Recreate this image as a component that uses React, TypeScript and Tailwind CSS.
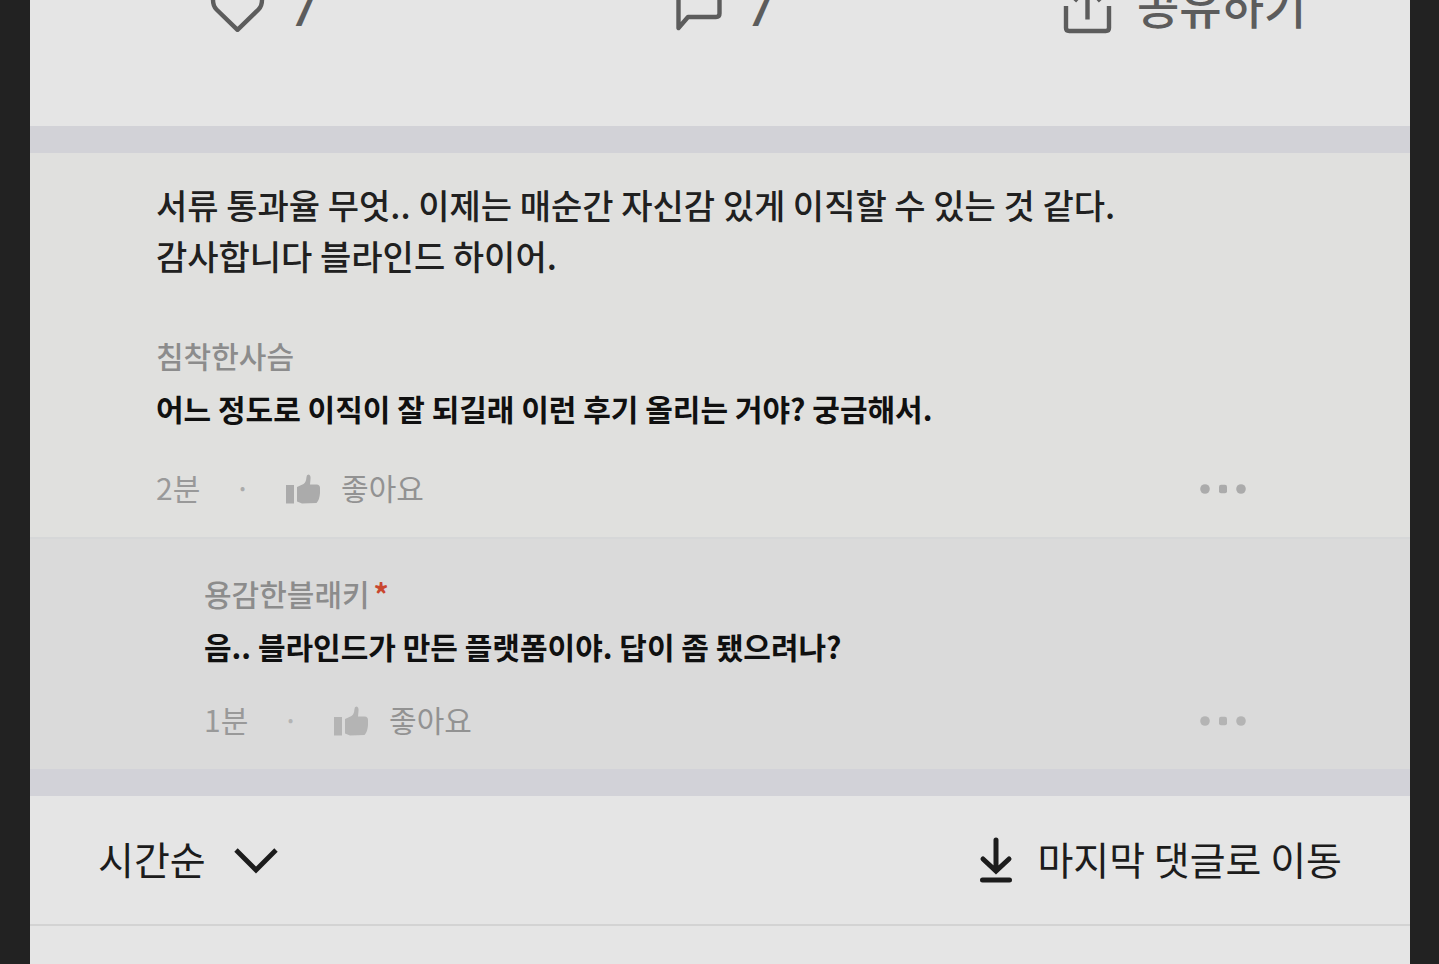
import type { ReactNode } from "react";

function HeartIcon() {
  return (
    <svg className="mt-1" width="56" height="54" viewBox="0 0 56 54" fill="none" stroke="currentColor" strokeWidth="4.4" strokeLinejoin="round" aria-hidden="true">
      <path d="M27.500 48.800 6.500 28.500Q3 25 3 19C3 10 9.500 4 16 4C21 4 25 6.500 27.500 11C30 6.500 34 4 39 4C45.500 4 52 10 52 19Q52 25 48.500 28.500Z" />
    </svg>
  );
}

function CommentIcon() {
  return (
    <svg className="mt-1" width="48" height="54" viewBox="0 0 48 54" fill="none" stroke="currentColor" strokeWidth="4.4" strokeLinejoin="round" aria-hidden="true">
      <path d="M3.500 47V8Q3.500 4 7.500 4H40.500Q44.500 4 44.500 8V32.500Q44.500 36 41 36H13Z" />
    </svg>
  );
}

function ShareIcon() {
  return (
    <svg className="mt-1" width="50" height="54" viewBox="0 0 50 54" fill="none" stroke="currentColor" strokeWidth="4.4" strokeLinejoin="round" aria-hidden="true">
      <path d="M3 25V47Q3 50 6.200 50H42.800Q46 50 46 47V25M24.500 38.500V5M11.500 20 24.500 6 37.500 20" />
    </svg>
  );
}

function ThumbIcon() {
  return (
    <svg className="mt-1" width="36" height="32" viewBox="0 0 36 32" fill="currentColor" aria-hidden="true">
      <path d="M1 12H9V30.500H1ZM12 14 18.500 11Q21 9.500 21.500 4Q21.500 1.500 23.500 1.500Q26 2 25.500 6L25 11.500H31.500Q35 11.500 35 15V20Q34.500 27 31.500 30L17 30.500 12 28.500Z" />
    </svg>
  );
}

function MoreIcon() {
  return (
    <svg className="mt-1" width="48" height="12" viewBox="0 0 48 12" fill="currentColor" aria-hidden="true">
      <circle cx="6" cy="6" r="4.800" />
      <rect x="20" y="1.800" width="8" height="8.400" rx="2" />
      <circle cx="42" cy="6" r="4.800" />
    </svg>
  );
}

function Action({ icon, children }: { icon: ReactNode; children: ReactNode }) {
  return (
    <button type="button" className="flex h-15 items-center gap-6 font-medium">
      {icon}
      {children}
    </button>
  );
}

function Count({ children }: { children: ReactNode }) {
  return <span className="pt-2 font-['Roboto',sans-serif] font-medium">{children}</span>;
}

type CommentProps = {
  author: string;
  isWriter?: boolean;
  time: string;
  metaClass: string;
  children: ReactNode;
};

function Comment({ author, isWriter, time, metaClass, children }: CommentProps) {
  return (
    <article>
      <p className="flex gap-1 text-[30px] leading-[52px] font-medium text-[#8c8c8c]">
        {author}
        {isWriter && <span className="font-bold text-[#c9472f]">*</span>}
      </p>
      <p className="text-[30px] leading-[54px] font-bold text-[#101010]">{children}</p>
      <div className={`flex h-14 items-center text-[30px] ${metaClass}`}>
        <time className="text-[#999999]">{time}</time>
        <span className="mx-[34px]">·</span>
        <button type="button" className="flex items-center gap-5">
          <ThumbIcon />
          <span className="text-[#929292]">좋아요</span>
        </button>
        <button type="button" aria-label="더보기" className="ml-auto">
          <MoreIcon />
        </button>
      </div>
    </article>
  );
}

export default function App() {
  return (
    <div className="min-h-screen bg-[#222222] pr-[29px] pl-[30px] font-['Noto_Sans_CJK_KR',sans-serif]">
      <main className="flex min-h-screen flex-col overflow-hidden bg-[#e5e5e5]">
        <div className="-mt-6 grid h-[150px] grid-cols-3 items-start justify-items-center gap-x-2.5 pl-2 text-[46px] leading-[60px] text-[#5c5c5c]">
          <Action icon={<HeartIcon />}>
            <Count>7</Count>
          </Action>
          <Action icon={<CommentIcon />}>
            <Count>7</Count>
          </Action>
          <Action icon={<ShareIcon />}>
            <span className="pb-1">공유하기</span>
          </Action>
        </div>

        <section className="border-t-[27px] border-[#d2d2d7] bg-[#e0e0de] pt-[26px] pr-[163px] pb-[22px] pl-[126px]">
          <p className="mb-12 text-[34px] leading-[51px] font-medium text-[#202020]">
            서류 통과율 무엇.. 이제는 매순간 자신감 있게 이직할 수 있는 것 같다.
            <br />
            감사합니다 블라인드 하이어.
          </p>
          <Comment author="침착한사슴" time="2분" metaClass="mt-6 text-[#ababab]">
            어느 정도로 이직이 잘 되길래 이런 후기 올리는 거야? 궁금해서.
          </Comment>
        </section>

        <section className="border-t-2 border-b-[27px] border-t-[#d6d7d8] border-b-[#d2d2d8] bg-[#dadada] pt-7 pr-[163px] pb-[22px] pl-[174px]">
          <Comment author="용감한블래키" isWriter time="1분" metaClass="mt-[18px] text-[#b4b4b4]">
            음.. 블라인드가 만든 플랫폼이야. 답이 좀 됐으려나?
          </Comment>
        </section>

        <div className="flex h-[130px] items-center justify-between border-b-2 border-[#d3d3d3] px-[68px] pb-1 text-[39px] text-[#1c1c1c]">
          <div className="relative flex items-center">
            <select aria-label="정렬" defaultValue="time" className="appearance-none bg-transparent pr-[72px]">
              <option value="time">시간순</option>
            </select>
            <svg className="pointer-events-none absolute right-0 mt-1" width="44" height="30" viewBox="0 0 44 30" fill="none" stroke="currentColor" strokeWidth="4.8" aria-hidden="true">
              <path d="M2 5 22 25 42 5" />
            </svg>
          </div>
          <button type="button" className="flex items-center gap-6">
            <svg className="mt-1" width="34" height="46" viewBox="0 0 34 46" fill="none" stroke="currentColor" strokeWidth="5" strokeLinecap="round" aria-hidden="true">
              <path d="M17 3V33M4 22 17 34 30 22M3.500 43H30.500" />
            </svg>
            <span>마지막 댓글로 이동</span>
          </button>
        </div>
      </main>
    </div>
  );
}
